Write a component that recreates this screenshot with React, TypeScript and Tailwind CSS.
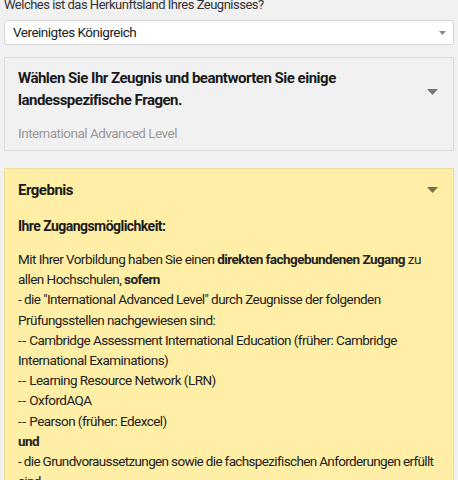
export default function App() {
  const font = { fontFamily: 'Roboto, "Noto Sans", sans-serif' }
  const dd = <span className="tracking-[0.5px]">--</span>
  return (
    <div className="min-h-[480px] overflow-hidden bg-[#f1f1f1] px-[4px] tracking-[-0.5px] text-[#222]" style={font}>
      <p className="mt-[-3px] text-[13px] leading-[16px] text-[#333]">Welches ist das Herkunftsland Ihres Zeugnisses?</p>

      <div className="mt-[7px] flex h-[25px] items-center justify-between rounded-[3px] border border-[#d6d6d6] bg-white pl-[8px] pr-[7px]">
        <span className="text-[13.5px] text-[#222]">Vereinigtes Königreich</span>
        <svg width="7" height="4" viewBox="0 0 7 4"><path d="M0 0h7L3.5 4z" fill="#888" /></svg>
      </div>

      <div className="mt-[12px] border border-[#dcdcdc] bg-[#f1f1f1] pb-[7px] pl-[13px] pr-[15px] pt-[9px]">
        <div className="flex items-center justify-between">
          <h2 className="w-[360px] text-[15px] font-bold leading-[22px] text-[#1a1a1a]">
            Wählen Sie Ihr Zeugnis und beantworten Sie einige landesspezifische Fragen.
          </h2>
          <svg width="11" height="6" viewBox="0 0 11 6" className="mt-[6px]"><path d="M0 0h11L5.5 6z" fill="#777" /></svg>
        </div>
        <p className="mt-[12px] text-[13.5px] leading-[20px] text-[#999]">International Advanced Level</p>
      </div>

      <div className="mt-[17px] border border-[#ecdf9c] bg-[#ffeea6] pb-[10px] pl-[13px] pr-[6px] pt-[10px]">
        <div className="flex items-center justify-between pr-[9px]">
          <h3 className="text-[15px] font-bold leading-[22px] text-[#1a1a1a]">Ergebnis</h3>
          <svg width="11" height="6" viewBox="0 0 11 6"><path d="M0 0h11L5.5 6z" fill="#776f4a" /></svg>
        </div>
        <p className="mt-[14px] text-[14px] font-bold leading-[22px] tracking-[-0.55px] text-[#1a1a1a]">Ihre Zugangsmöglichkeit:</p>
        <div className="mt-[12px] text-[13.5px] leading-[20.2px] tracking-[-0.55px] text-[#222]">
          <p className="pr-[9px]">
            Mit Ihrer Vorbildung haben Sie einen <b>direkten fachgebundenen Zugang</b> zu allen Hochschulen, <b>sofern</b>
          </p>
          <p className="pr-[9px]">- die "International Advanced Level" durch Zeugnisse der folgenden Prüfungsstellen nachgewiesen sind:</p>
          <p className="pr-[9px]">{dd} Cambridge Assessment International Education (früher: Cambridge International Examinations)</p>
          <p>{dd} Learning Resource Network (LRN)</p>
          <p>{dd} OxfordAQA</p>
          <p>{dd} Pearson (früher: Edexcel)</p>
          <p><b>und</b></p>
          <p className="tracking-[-0.65px]">- die Grundvoraussetzungen sowie die fachspezifischen Anforderungen erfüllt sind.</p>
        </div>
      </div>
    </div>
  )
}
